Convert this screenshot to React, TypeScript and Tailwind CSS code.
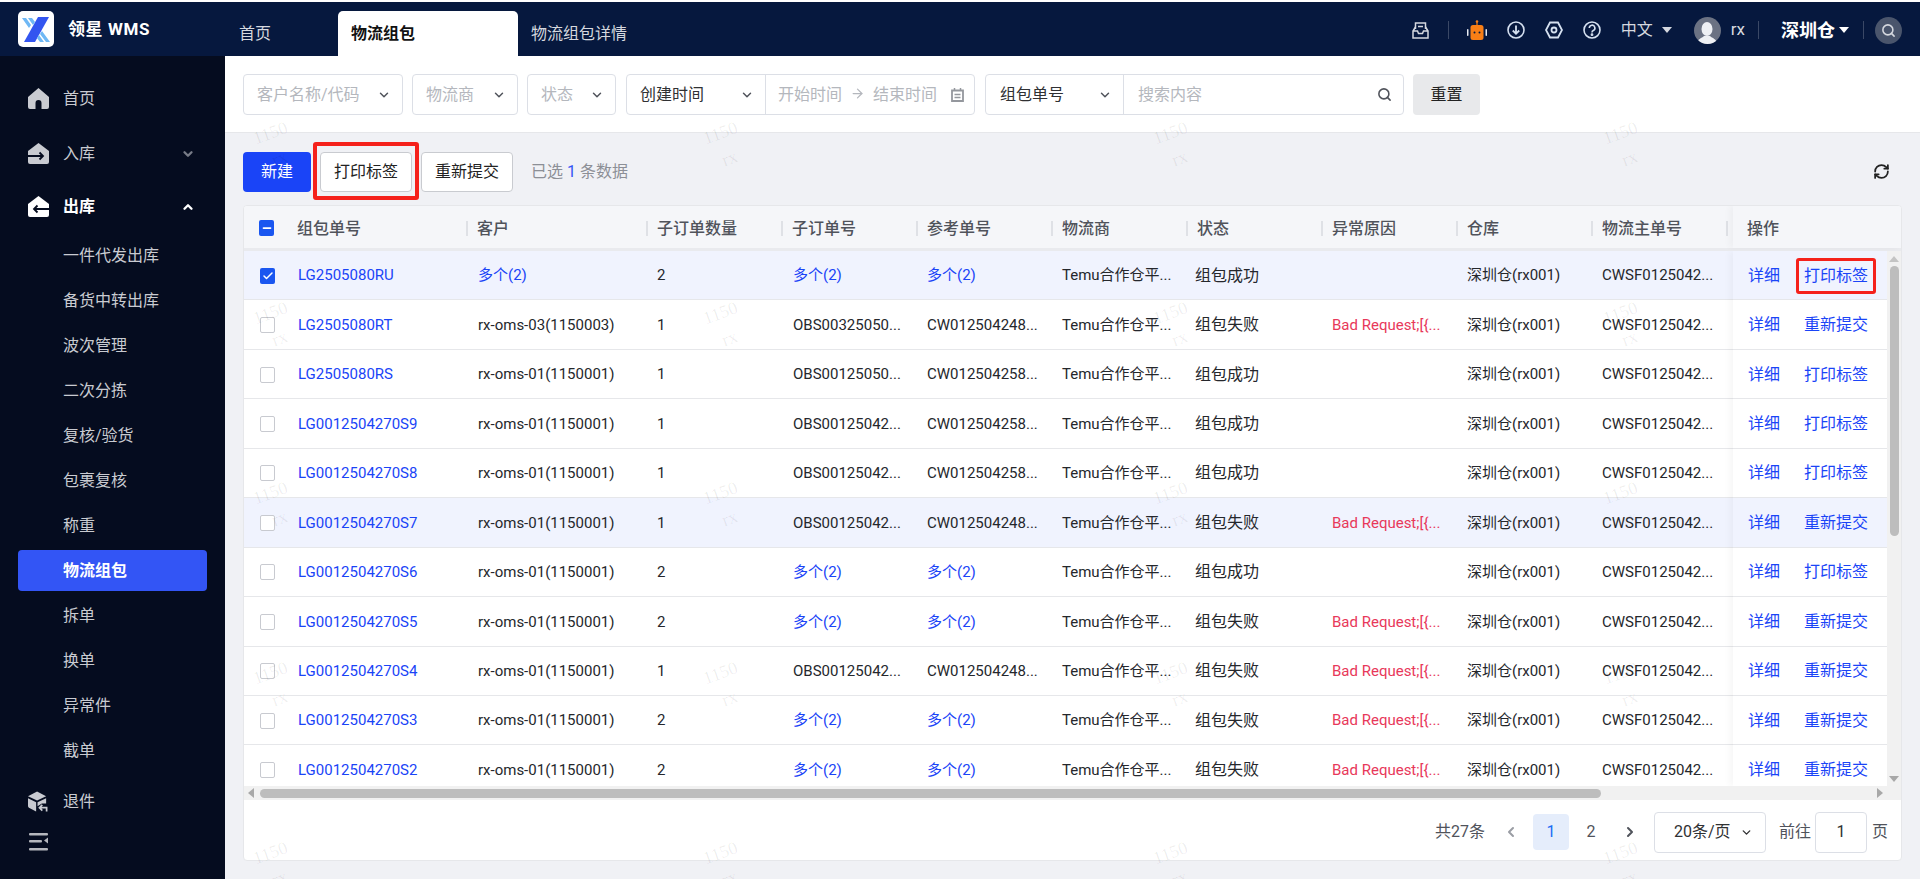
import { ArrowRight, ChevronDown, ChevronLeft, ChevronRight, ChevronUp, Search, RefreshCw, Check, Minus } from 'lucide-react';

type Row = {
  id: string;
  customer: string;
  count: number;
  sub: string;
  ref: string;
  ok: boolean;
  selected?: boolean;
  hover?: boolean;
};

const rows: Row[] = [
  { id: 'LG2505080RU', customer: '多个(2)', count: 2, sub: '多个(2)', ref: '多个(2)', ok: true, selected: true },
  { id: 'LG2505080RT', customer: 'rx-oms-03(1150003)', count: 1, sub: 'OBS00325050...', ref: 'CW012504248...', ok: false },
  { id: 'LG2505080RS', customer: 'rx-oms-01(1150001)', count: 1, sub: 'OBS00125050...', ref: 'CW012504258...', ok: true },
  { id: 'LG0012504270S9', customer: 'rx-oms-01(1150001)', count: 1, sub: 'OBS00125042...', ref: 'CW012504258...', ok: true },
  { id: 'LG0012504270S8', customer: 'rx-oms-01(1150001)', count: 1, sub: 'OBS00125042...', ref: 'CW012504258...', ok: true },
  { id: 'LG0012504270S7', customer: 'rx-oms-01(1150001)', count: 1, sub: 'OBS00125042...', ref: 'CW012504248...', ok: false, hover: true },
  { id: 'LG0012504270S6', customer: 'rx-oms-01(1150001)', count: 2, sub: '多个(2)', ref: '多个(2)', ok: true },
  { id: 'LG0012504270S5', customer: 'rx-oms-01(1150001)', count: 2, sub: '多个(2)', ref: '多个(2)', ok: false },
  { id: 'LG0012504270S4', customer: 'rx-oms-01(1150001)', count: 1, sub: 'OBS00125042...', ref: 'CW012504248...', ok: false },
  { id: 'LG0012504270S3', customer: 'rx-oms-01(1150001)', count: 2, sub: '多个(2)', ref: '多个(2)', ok: false },
  { id: 'LG0012504270S2', customer: 'rx-oms-01(1150001)', count: 2, sub: '多个(2)', ref: '多个(2)', ok: false },
];

const headers = ['客户', '子订单数量', '子订单号', '参考单号', '物流商', '状态', '异常原因', '仓库', '物流主单号'];
const subMenu = ['一件代发出库', '备货中转出库', '波次管理', '二次分拣', '复核/验货', '包裹复核', '称重', '物流组包', '拆单', '换单', '异常件', '截单'];

const cols = 'grid grid-cols-[44px_180px_180px_135px_135px_135px_135px_135px_135px_135px_135px_1fr]';

function HouseIcon({ arrow }: { arrow?: 'in' | 'out' }) {
  return (
    <svg viewBox="0 0 21 21" className="h-[21px] w-[21px]" fill="currentColor">
      {arrow ? (
        <>
          <path d="M10.5 0 21 8v11a2 2 0 0 1-2 2H2a2 2 0 0 1-2-2V8Z" />
          <path
            d={arrow === 'in' ? 'M0 13h15M11.500 9.500l3.500 3.500-3.500 3.500' : 'M21 13H6M9.500 9.500 6 13l3.500 3.500'}
            stroke="#050c1f"
            strokeWidth="1.800"
            fill="none"
          />
        </>
      ) : (
        <path d="M10.5 0 21 9v10a2 2 0 0 1-2 2h-5.500v-6a3 3 0 0 0-6 0v6H2a2 2 0 0 1-2-2V9Z" />
      )}
    </svg>
  );
}

function BoxReturnIcon() {
  return (
    <svg viewBox="0 0 22 22" className="h-[22px] w-[21px]" fill="currentColor">
      <path d="M9.5 0 19 5 9.5 9.5 0 5Z" />
      <path d="M0 7l8.5 4.3V21L1 17a2 2 0 0 1-1-1.7Z" />
      <path d="M19 7v5.5h-4.5l-4.5 3V11.300Z" />
      <path d="M12 17h7.500v4M15 14l-3 3 3 3" stroke="currentColor" strokeWidth="1.800" fill="none" />
    </svg>
  );
}

function Logo() {
  return (
    <div className="flex h-9 w-9 shrink-0 items-center justify-center rounded-[5px] bg-white">
      <svg viewBox="0 0 36 36" className="h-9 w-9">
        <path d="M20 6h11L17 31H6Z" fill="#3355f0" />
        <path d="M4 7h4l5 7-2 3ZM10 7h4l3 4-2 3Z" fill="#6fb8f5" />
        <path d="M22 23l2-3 8 11h-4ZM19 27l2-3 5 7h-4Z" fill="#6fb8f5" />
      </svg>
    </div>
  );
}

function InboxIcon() {
  return (
    <svg viewBox="0 0 17 17" className="h-[17px] w-[17px]" fill="none" stroke="#d5d8df" strokeWidth="1.500">
      <path d="M3.500 7V1h10v6M6 4.500h5" />
      <path d="M3.500 5 1 9v7h15V9l-2.500-4M1 9h4.500l1 2.500h4L11.500 9H16" />
    </svg>
  );
}

function Robot() {
  return (
    <svg viewBox="0 0 20 20" className="h-[20px] w-[20px]">
      <circle cx="10" cy="1.500" r="1.300" fill="#f97f16" />
      <rect x="9.400" y="1.500" width="1.200" height="4" fill="#f97f16" />
      <rect x="3.500" y="5" width="13" height="15" rx="2.500" fill="#f97f16" />
      <rect x="0" y="9" width="1.500" height="7" rx=".7" fill="#e8ebf2" />
      <rect x="18.500" y="9" width="1.500" height="7" rx=".7" fill="#e8ebf2" />
      <circle cx="7.500" cy="12.500" r="1" fill="#06183e" />
      <circle cx="12.500" cy="12.500" r="1" fill="#06183e" />
    </svg>
  );
}

function DownloadIcon() {
  return (
    <svg viewBox="0 0 18 18" className="h-[18px] w-[18px]" fill="none" stroke="#d5e0f0" strokeWidth="1.600">
      <circle cx="9" cy="9" r="8" />
      <path d="M9 4.500v8M5.800 9.500 9 12.800l3.200-3.300" strokeWidth="1.800" />
    </svg>
  );
}

function SettingIcon() {
  return (
    <svg viewBox="0 0 18 18" className="h-[18px] w-[18px]" fill="none" stroke="#d5e0f0" strokeWidth="1.800">
      <path d="M5 1.500h8L17 9l-4 7.500H5L1 9Z" />
      <circle cx="9" cy="9" r="2.500" />
    </svg>
  );
}

function HelpIcon() {
  return (
    <svg viewBox="0 0 18 18" className="h-[18px] w-[18px]" fill="none" stroke="#d5e0f0" strokeWidth="1.600">
      <circle cx="9" cy="9" r="8" />
      <path d="M6.300 7a2.800 2.800 0 1 1 4 2.500C9.300 10 9 10.500 9 11.500" />
      <circle cx="9" cy="13.700" r=".6" fill="#d5e0f0" />
    </svg>
  );
}

function ClipboardIcon() {
  return (
    <svg viewBox="0 0 13 14" className="h-[14px] w-[13px]" fill="none" stroke="#94979d" strokeWidth="1.800">
      <path d="M1 2.500h11V13H1Z" />
      <path d="M3.500 0v3M9.500 0v3M3.500 6.500h6M3.500 9.500h6" strokeWidth="1.500" />
    </svg>
  );
}

function Caret({ className }: { className: string }) {
  return <span className={`inline-block h-0 w-0 border-x-[5px] border-t-[6px] border-x-transparent ${className}`} />;
}

function Sidebar() {
  return (
    <aside className="flex w-[225px] shrink-0 flex-col bg-[#050c1f] pt-[20px] text-[16px] text-[#c9cbd1]">
      <div className="flex h-[45px] shrink-0 items-center pl-[28px]">
        <HouseIcon />
        <span className="ml-[14px]">首页</span>
      </div>
      <div className="mt-[10px] flex h-[45px] shrink-0 items-center pl-[28px] pr-[30px]">
        <HouseIcon arrow="in" />
        <span className="ml-[14px] flex-1">入库</span>
        <ChevronDown className="size-[14px] text-[#777b87]" strokeWidth={4} />
      </div>
      <div className="mt-[8px] flex h-[45px] shrink-0 items-center pl-[28px] pr-[30px] font-bold text-white">
        <HouseIcon arrow="out" />
        <span className="ml-[14px] flex-1">出库</span>
        <ChevronUp className="size-[14px]" strokeWidth={4} />
      </div>
      <div className="mt-[6px] flex flex-col">
        {subMenu.map((m) => (
          <div
            key={m}
            className={`mx-[18px] mb-[4px] flex h-[41px] shrink-0 items-center rounded-[4px] pl-[45px] ${m === '物流组包' ? 'bg-[#3355f5] font-bold text-white' : ''}`}>
            {m}
          </div>
        ))}
      </div>
      <div className="mt-[4px] flex h-[45px] shrink-0 items-center pl-[28px]">
        <BoxReturnIcon />
        <span className="ml-[14px]">退件</span>
      </div>
      <svg viewBox="0 0 20 18" className="ml-[29px] mt-[9px] h-[18px] w-[20px] shrink-0" fill="#b5b7bd">
        <rect width="19" height="2.500" rx="1" />
        <rect y="7" width="13" height="2.500" rx="1" />
        <rect y="15" width="19" height="2.500" rx="1" />
        <path d="M19 4.500v6l-4-3Z" />
      </svg>
    </aside>
  );
}

function Header() {
  return (
    <header className="flex h-[54px] shrink-0 bg-[#06183e] text-white">
      <div className="flex w-[225px] shrink-0 items-start pl-[18px] pt-[9px]">
        <Logo />
        <span className="ml-[14px] mt-[6px] text-[17px] font-bold tracking-[0.6px]">领星 WMS</span>
      </div>
      <div className="flex flex-1 items-end text-[16px]">
        <span className="mb-[10px] ml-[14px] w-[99px] text-[#d5d8df]">首页</span>
        <div className="flex h-[45px] w-[180px] items-center rounded-t-[5px] bg-white pl-[13px] pt-[1px] font-bold text-[#111]">物流组包</div>
        <span className="mb-[10px] ml-[13px] text-[#d5d8df]">物流组包详情</span>
      </div>
      <div className="flex items-center pr-[18px] pt-[2px] text-[#d5d8df]">
        <InboxIcon />
        <span className="ml-[19px] h-[18px] w-px bg-[#3a4866]" />
        <span className="ml-[18px] flex">
          <Robot />
        </span>
        <span className="ml-[20px] flex">
          <DownloadIcon />
        </span>
        <span className="ml-[20px] flex">
          <SettingIcon />
        </span>
        <span className="ml-[20px] flex">
          <HelpIcon />
        </span>
        <span className="ml-[20px] text-[16px]">中文</span>
        <Caret className="ml-[9px] border-t-[#d5d8df]" />
        <span className="ml-[22px] flex h-[27px] w-[27px] items-end justify-center overflow-hidden rounded-full bg-[#6b7283]">
          <svg viewBox="0 0 20 24" className="h-[24px] w-[20px]" fill="#eef0f4">
            <ellipse cx="10" cy="9" rx="5.500" ry="7" />
            <path d="M0 24c0-5 5-6 7-8h6c2 2 7 3 7 8Z" />
          </svg>
        </span>
        <span className="ml-[10px] text-[17px]">rx</span>
        <span className="ml-[13px] h-[18px] w-px bg-[#3a4866]" />
        <span className="ml-[22px] text-[18px] font-bold text-white">深圳仓</span>
        <Caret className="ml-[4px] border-t-white" />
        <span className="ml-[14px] h-[18px] w-px bg-[#3a4866]" />
        <span className="ml-[11px] flex h-[27px] w-[27px] items-center justify-center rounded-full bg-[#4a556c]">
          <Search className="size-[15px]" strokeWidth={2.500} />
        </span>
      </div>
    </header>
  );
}

function Select({ w, label, dark }: { w: string; label: string; dark?: boolean }) {
  return (
    <div className={`flex h-[41px] items-center justify-between rounded-[4px] border border-[#dcdfe6] pl-[13px] pr-[11px] text-[16px] ${w} ${dark ? 'text-[#303133]' : 'text-[#b4b7bd]'}`}>
      <span>{label}</span>
      <ChevronDown className="size-[14px] text-[#50535b]" strokeWidth={2.500} />
    </div>
  );
}

function FilterBar() {
  return (
    <div className="flex h-[77px] shrink-0 items-center border-b border-[#e6e7ea] bg-white pl-[18px] pt-[1px]">
      <Select w="w-[160px]" label="客户名称/代码" />
      <Select w="ml-[9px] w-[106px]" label="物流商" />
      <Select w="ml-[9px] w-[89px]" label="状态" />
      <div className="ml-[10px] flex h-[41px] w-[349px] items-center rounded-[4px] border border-[#dcdfe6] text-[16px]">
        <div className="flex h-full w-[139px] items-center justify-between border-r border-[#dcdfe6] pl-[13px] pr-[11px] text-[#303133]">
          <span>创建时间</span>
          <ChevronDown className="size-[14px] text-[#50535b]" strokeWidth={2.500} />
        </div>
        <div className="flex flex-1 items-center pl-[12px] text-[#b4b7bd]">
          <span>开始时间</span>
          <ArrowRight className="mx-[8px] mb-[3px] size-[15px]" />
          <span>结束时间</span>
          <span className="ml-[14px] flex">
            <ClipboardIcon />
          </span>
        </div>
      </div>
      <div className="ml-[10px] flex h-[41px] w-[419px] items-center rounded-[4px] border border-[#dcdfe6] text-[16px]">
        <div className="flex h-full w-[138px] items-center justify-between border-r border-[#dcdfe6] pl-[14px] pr-[11px] text-[#303133]">
          <span>组包单号</span>
          <ChevronDown className="size-[14px] text-[#50535b]" strokeWidth={2.500} />
        </div>
        <span className="flex-1 pl-[14px] text-[#b4b7bd]">搜索内容</span>
        <Search className="mr-[11px] size-[15px] text-[#50535b]" strokeWidth={2.500} />
      </div>
      <button className="ml-[9px] h-[41px] w-[67px] rounded-[4px] bg-[#e8e9eb] text-[16px] text-[#222]">重置</button>
    </div>
  );
}

function Toolbar() {
  return (
    <div className="flex h-[72px] shrink-0 items-center justify-between pl-[18px] pr-[30px] pt-[5px]">
      <div className="flex items-center text-[16px]">
        <button className="h-[40px] w-[68px] rounded-[4px] bg-[#1a44f7] text-white">新建</button>
        <div className="relative ml-[9px]">
          <button className="h-[40px] w-[92px] rounded-[4px] border border-[#c9cbd0] bg-white text-[#222]">打印标签</button>
          <span className="pointer-events-none absolute -inset-x-[7px] -top-[10px] -bottom-[8px] rounded-[3px] border-[4px] border-[#f5211b]" />
        </div>
        <button className="ml-[9px] h-[40px] w-[92px] rounded-[4px] border border-[#c9cbd0] bg-white text-[#222]">重新提交</button>
        <span className="ml-[18px] text-[#8c8f96]">
          已选 <span className="text-[#3355f5]">1</span> 条数据
        </span>
      </div>
      <RefreshCw className="size-[17px] text-[#222]" strokeWidth={2.500} />
    </div>
  );
}

function Checkbox({ state }: { state?: 'checked' | 'partial' }) {
  if (state) {
    return (
      <span className="flex h-[16px] w-[15px] items-center justify-center rounded-[2px] bg-[#1a56f0] text-white">
        {state === 'checked' ? <Check className="size-[12px]" strokeWidth={3} /> : <Minus className="size-[12px]" strokeWidth={3.500} />}
      </span>
    );
  }
  return <span className="block h-[16px] w-[15px] rounded-[2px] border border-[#c8cad0] bg-white" />;
}

function TableRow({ row }: { row: Row }) {
  const bg = row.selected || row.hover ? 'bg-[#f0f3fe]' : 'bg-white';
  const link = 'text-[#1a44f7]';
  const text = 'text-[15px] text-[#25272c]';
  return (
    <div className={`${cols} h-[49.450px] shrink-0 items-center border-b border-[#e6e7ea] pt-[1px] ${bg}`}>
      <div className="pl-[16px]">
        <Checkbox state={row.selected ? 'checked' : undefined} />
      </div>
      <div className={`pl-[10px] text-[15px] ${link}`}>{row.id}</div>
      <div className={`pl-[10px] text-[15px] ${row.selected ? link : 'text-[#25272c]'}`}>{row.customer}</div>
      <div className={`pl-[9px] ${text}`}>{row.count}</div>
      <div className={`pl-[10px] text-[15px] ${row.sub === '多个(2)' ? link : 'text-[#25272c]'}`}>{row.sub}</div>
      <div className={`pl-[9px] text-[15px] ${row.ref === '多个(2)' ? link : 'text-[#25272c]'}`}>{row.ref}</div>
      <div className={`pl-[9px] ${text}`}>Temu合作仓平...</div>
      <div className="pl-[7px] text-[16px] text-[#25272c]">{row.ok ? '组包成功' : '组包失败'}</div>
      <div className="truncate pl-[9px] text-[15px] text-[#e8385a]">{row.ok ? '' : 'Bad Request;[{...'}</div>
      <div className={`pl-[9px] ${text}`}>深圳仓(rx001)</div>
      <div className={`pl-[9px] ${text}`}>CWSF0125042...</div>
      <div />
    </div>
  );
}

function ActionCell({ row }: { row: Row }) {
  return (
    <div className={`flex h-[49.450px] shrink-0 items-center border-b border-[#e6e7ea] pl-[15px] pt-[1px] text-[16px] text-[#1a44f7] ${row.selected || row.hover ? 'bg-[#f0f3fe]' : 'bg-white'}`}>
      <span>详细</span>
      <span className="relative ml-[24px]">
        {row.ok ? '打印标签' : '重新提交'}
        {row.selected && (
          <span className="pointer-events-none absolute -inset-x-[8px] -top-[6px] -bottom-[6px] rounded-[3px] border-[3px] border-[#f5211b]" />
        )}
      </span>
    </div>
  );
}

function Table() {
  return (
    <div className="mx-[18px] flex h-[656px] shrink-0 flex-col overflow-hidden rounded-[4px] border border-[#e6e7ea] bg-white">
      <div className={`${cols} h-[45px] shrink-0 items-center border-b-[3px] border-[#e9eaee] bg-[#f5f6f9] text-[16px] font-medium leading-[15px] text-[#50535b]`}>
        <div className="pl-[15px] pt-[2px]">
          <Checkbox state="partial" />
        </div>
        <div className="mt-[3px] border-r-2 border-[#dfe1e6] pl-[9px]">组包单号</div>
        {headers.map((h) => (
          <div key={h} className="mt-[3px] border-r-2 border-[#dfe1e6] pl-[9px]">
            {h}
          </div>
        ))}
        <div className="ml-[5px] flex h-full items-center pl-[14px] pt-[3px] shadow-[-4px_0_6px_rgba(0,0,0,0.03)]">操作</div>
      </div>
      <div className="flex h-[535px] shrink-0 overflow-hidden">
        <div className="flex min-w-0 flex-1 flex-col overflow-hidden">
          {rows.map((r) => (
            <TableRow key={r.id} row={r} />
          ))}
        </div>
        <div className="flex w-[154px] shrink-0 flex-col overflow-hidden shadow-[-4px_0_6px_rgba(0,0,0,0.03)]">
          {rows.map((r) => (
            <ActionCell key={r.id} row={r} />
          ))}
        </div>
        <div className="flex w-[14px] shrink-0 flex-col items-center bg-[#f1f1f1]">
          <span className="mt-[5px] h-0 w-0 border-x-[5px] border-b-[6px] border-x-transparent border-b-[#c4c4c4]" />
          <span className="mt-[4px] h-[270px] w-[9px] rounded-full bg-[#bdbdbd]" />
          <span className="mb-[4px] mt-auto h-0 w-0 border-x-[5px] border-t-[6px] border-x-transparent border-t-[#a8a8a8]" />
        </div>
      </div>
      <div className="flex h-[14px] shrink-0 items-center bg-[#f1f1f1] pl-[4px] pr-[18px]">
        <span className="h-0 w-0 border-y-[5px] border-r-[6px] border-y-transparent border-r-[#a8a8a8]" />
        <span className="ml-[6px] h-[9px] w-[1341px] rounded-full bg-[#bdbdbd]" />
        <span className="ml-auto h-0 w-0 border-y-[5px] border-l-[6px] border-y-transparent border-l-[#a8a8a8]" />
      </div>
      <div className="flex flex-1 items-center justify-end pr-[13px] pt-[4px] text-[16px] text-[#50535b]">
        <span>共27条</span>
        <ChevronLeft className="ml-[18px] size-[16px] text-[#9a9da4]" strokeWidth={3} />
        <span className="ml-[14px] flex h-[36px] w-[36px] items-center justify-center rounded-[4px] bg-[#e5edfb] text-[#1a6cf5]">1</span>
        <span className="flex h-[36px] w-[44px] items-center justify-center">2</span>
        <ChevronRight className="ml-[9px] size-[16px] text-[#50535b]" strokeWidth={3} />
        <div className="ml-[16px] flex h-[41px] w-[112px] items-center justify-between rounded-[4px] border border-[#dcdfe6] pl-[19px] pr-[12px] text-[#303133]">
          <span>20条/页</span>
          <ChevronDown className="size-[13px]" strokeWidth={2.500} />
        </div>
        <span className="ml-[13px]">前往</span>
        <div className="ml-[4px] flex h-[41px] w-[52px] items-center justify-center rounded-[4px] border border-[#dcdfe6] text-[#303133]">1</div>
        <span className="ml-[5px]">页</span>
      </div>
    </div>
  );
}

function Watermarks() {
  return (
    <div className="pointer-events-none absolute inset-0 grid grid-cols-[repeat(4,450px)] auto-rows-[180px] items-start overflow-hidden pl-[30px] pt-[64px] font-['Liberation_Serif',serif] text-[18px] leading-[24px] text-[rgba(0,0,0,0.07)]">
      {Array.from({ length: 20 }).map((_, i) => (
        <div key={i} className="flex w-[40px] rotate-[-20deg] flex-col items-center">
          <span>1150</span>
          <span className="mt-[3px]">rx</span>
        </div>
      ))}
    </div>
  );
}

export default function App() {
  return (
    <div className="flex h-[879px] w-[1920px] flex-col overflow-hidden border-t-2 border-white bg-[#f0f1f5] font-['Roboto','Noto_Sans_CJK_SC',sans-serif]">
      <Header />
      <div className="flex min-h-0 flex-1">
        <Sidebar />
        <main className="relative flex min-w-0 flex-1 flex-col">
          <FilterBar />
          <Toolbar />
          <Table />
          <Watermarks />
        </main>
      </div>
    </div>
  );
}
